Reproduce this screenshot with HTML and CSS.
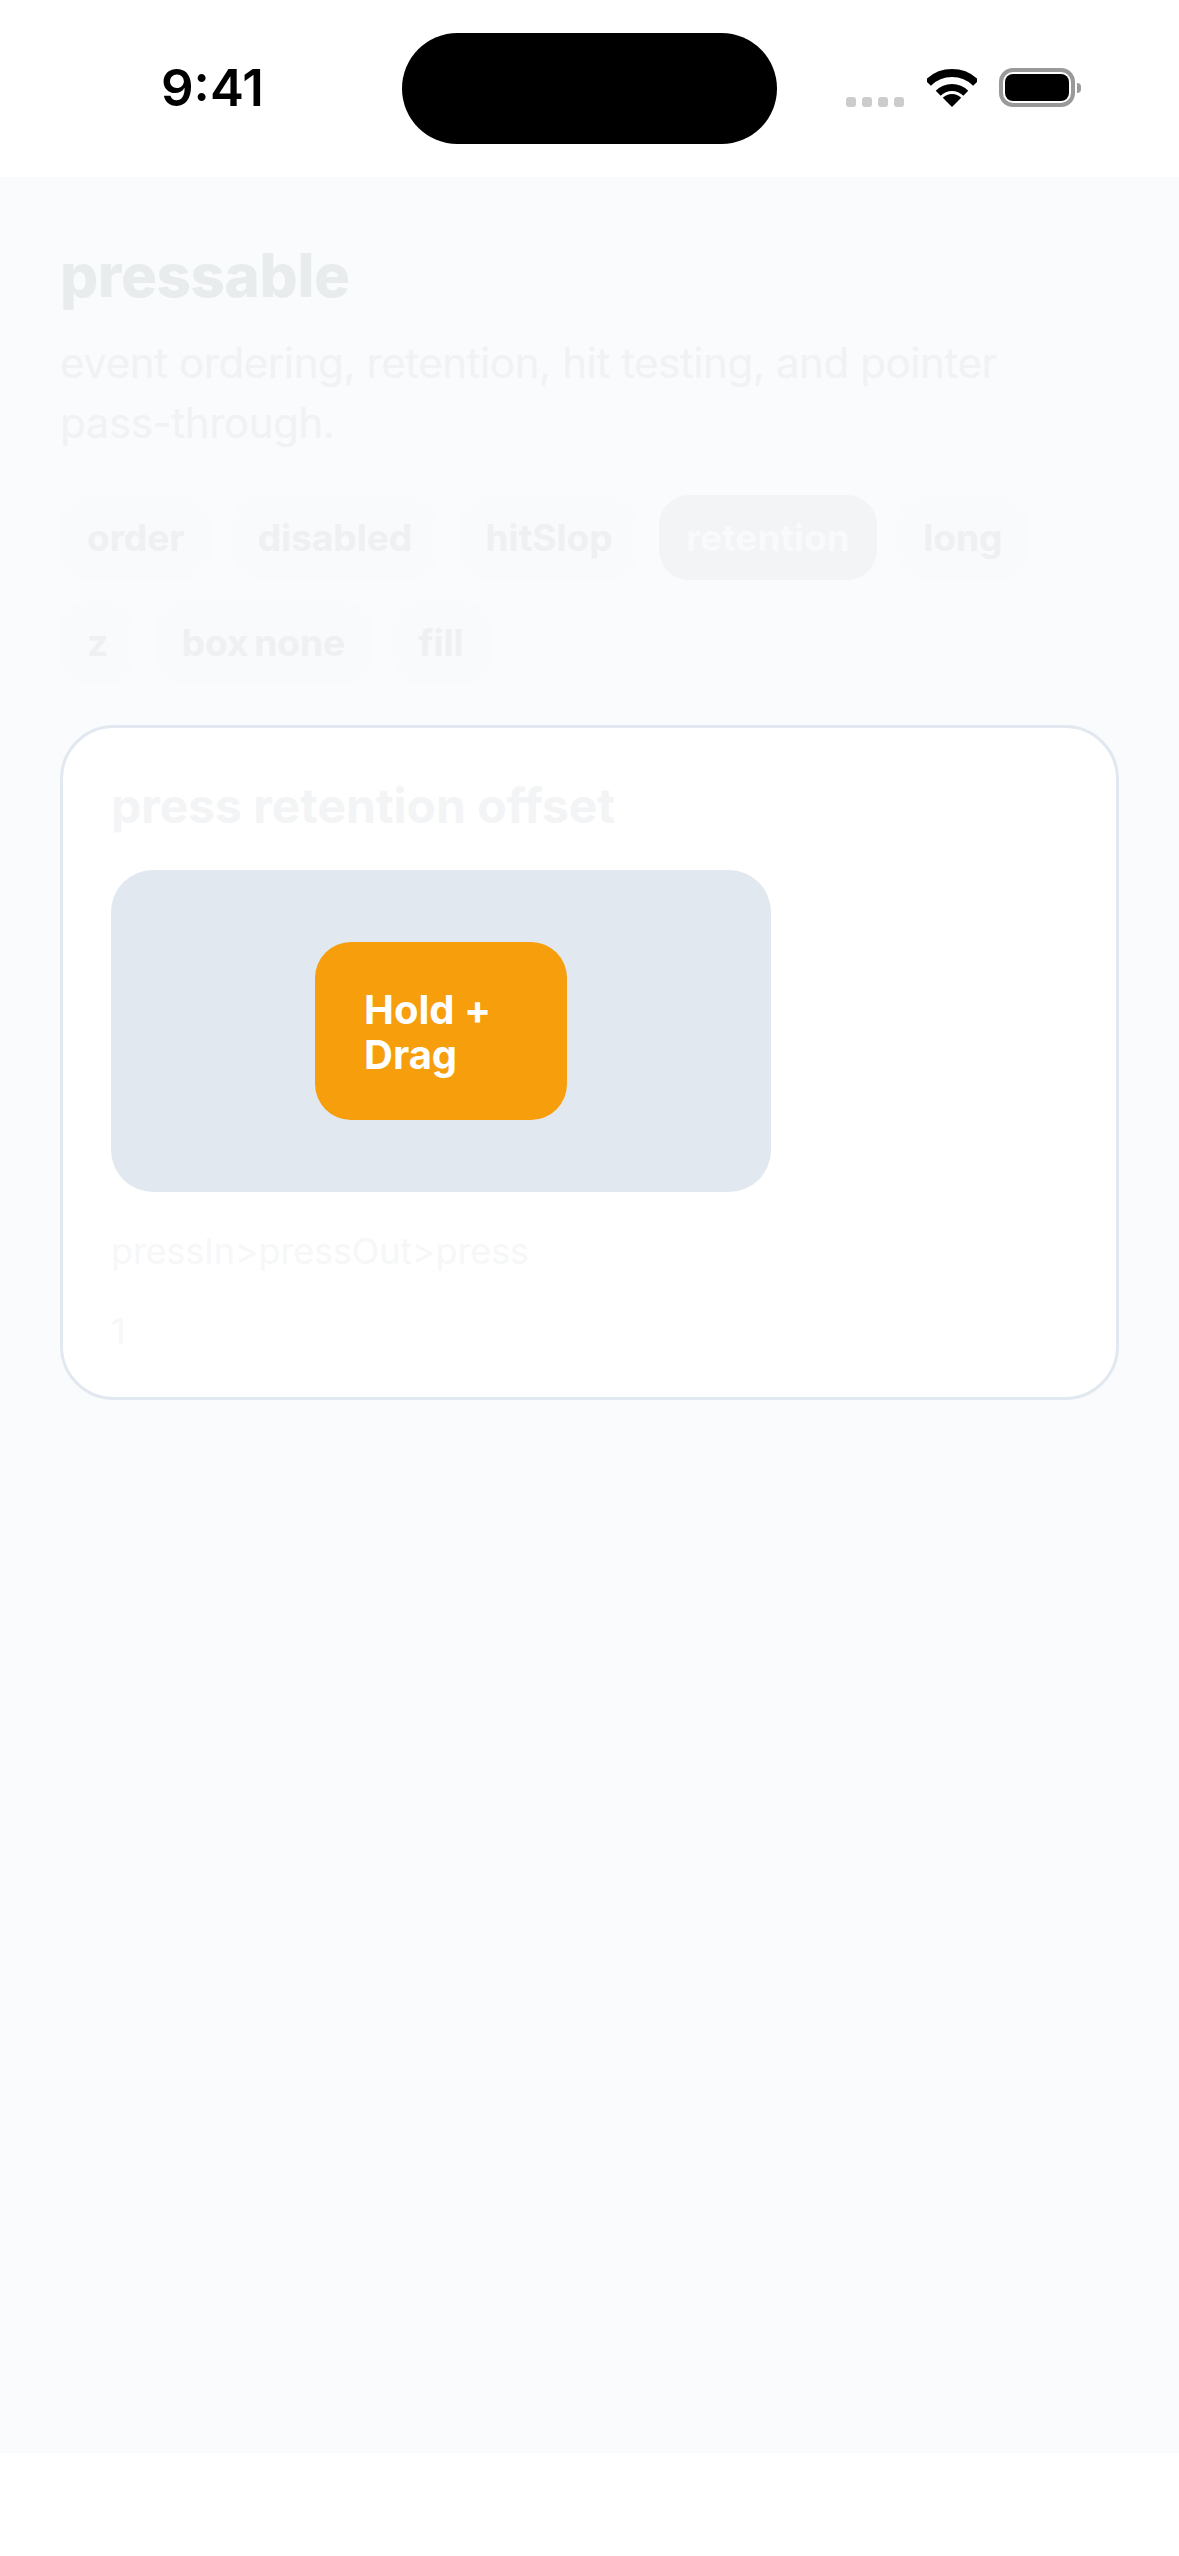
FILE: index.html
```html
<!DOCTYPE html>
<html lang="en">
<head>
    <meta charset="UTF-8">
    <meta name="viewport" content="width=device-width, initial-scale=1.0">
    <title>pressable</title>
    <link rel="stylesheet" href="styles.css">
</head>
<body>
    <div class="status-bar">
        <div class="time">9:41</div>
        <div class="island"></div>
        <div class="status-icons">
            <div class="signal">
                <span class="signal-dot"></span>
                <span class="signal-dot"></span>
                <span class="signal-dot"></span>
                <span class="signal-dot"></span>
            </div>
            <svg class="wifi" width="50" height="38" viewBox="0 0 50 38">
                <path d="M25 38L15.8 28.8A13 13 0 0 1 34.2 28.8Z" fill="#000"/>
                <path d="M11.2 24.2A19.5 19.5 0 0 1 38.8 24.2" fill="none" stroke="#000" stroke-width="7"/>
                <path d="M1 14A34 34 0 0 1 49 14" fill="none" stroke="#000" stroke-width="8"/>
            </svg>
            <div class="battery">
                <div class="battery-body"><div class="battery-fill"></div></div>
                <div class="battery-nub"></div>
            </div>
        </div>
    </div>

    <div class="screen">
        <h1 class="title">pressable</h1>
        <p class="subtitle">event ordering, retention, hit testing, and pointer pass-through.</p>

        <div class="chips">
            <div class="chip">order</div>
            <div class="chip">disabled</div>
            <div class="chip">hitSlop</div>
            <div class="chip active">retention</div>
            <div class="chip">long</div>
            <div class="chip">z</div>
            <div class="chip">box none</div>
            <div class="chip">fill</div>
        </div>

        <div class="card">
            <h2 class="card-title">press retention offset</h2>
            <div class="track">
                <div class="hold-btn">Hold + Drag</div>
            </div>
            <div class="log">pressIn&gt;pressOut&gt;press</div>
            <div class="count">1</div>
        </div>
    </div>

    <div class="home-area"></div>
</body>
</html>
```

FILE: styles.css
```css
* {
    margin: 0;
    padding: 0;
    box-sizing: border-box;
}

body {
    width: 1179px;
    height: 2556px;
    display: flex;
    flex-direction: column;
    font-family: Inter, "Liberation Sans", sans-serif;
    background: #ffffff;
}

.status-bar {
    height: 177px;
    display: flex;
    align-items: flex-start;
    background: #ffffff;
}

.time {
    width: 241px;
    margin: 58px 0 0 161px;
    font-size: 51px;
    line-height: 60px;
    font-weight: 600;
    color: #000000;
}

.island {
    width: 375px;
    height: 111px;
    margin-top: 33px;
    border-radius: 56px;
    background: #000000;
}

.status-icons {
    display: flex;
    align-items: flex-end;
    margin: 68px 0 0 69px;
}

.signal {
    display: flex;
    gap: 6px;
    margin-right: 23px;
}

.signal-dot {
    width: 10px;
    height: 10px;
    border-radius: 3px;
    background: #cccccc;
}

.wifi {
    display: block;
    margin-right: 22px;
}

.battery {
    display: flex;
    align-items: center;
}

.battery-body {
    width: 76px;
    height: 39px;
    padding: 2px;
    border: 4px solid #999999;
    border-radius: 14px;
}

.battery-fill {
    width: 100%;
    height: 100%;
    border-radius: 8px;
    background: #000000;
}

.battery-nub {
    width: 4px;
    height: 10px;
    margin-left: 2px;
    border-radius: 0 5px 5px 0;
    background: #999999;
}

.screen {
    flex: 1;
    padding: 62px 60px 0;
    background: #f9fbfd;
}

.title {
    font-size: 60px;
    line-height: 72px;
    font-weight: 800;
    letter-spacing: -0.4px;
    color: #e9eced;
}

.subtitle {
    margin-top: 22px;
    font-size: 42px;
    line-height: 60px;
    letter-spacing: -0.4px;
    color: #f0f2f4;
}

.chips {
    display: flex;
    flex-wrap: wrap;
    gap: 20px 19.5px;
    margin-top: 42px;
}

.chip {
    height: 85px;
    padding: 0 27px;
    border-radius: 30px;
    font-size: 37px;
    line-height: 85px;
    font-weight: 700;
    word-spacing: -3px;
    color: #eef0f2;
    background: #f9fafc;
}

.chip.active {
    color: #f9fafb;
    background: #f3f4f6;
}

.card {
    margin-top: 40px;
    height: 675px;
    padding: 48px;
    border: 3px solid #e2e8f0;
    border-radius: 54px;
    background: #ffffff;
}

.card-title {
    font-size: 48px;
    line-height: 60px;
    font-weight: 700;
    color: #f3f4f5;
}

.track {
    width: 660px;
    height: 322px;
    margin-top: 34px;
    display: flex;
    align-items: center;
    justify-content: center;
    border-radius: 42px;
    background: #e2e8f0;
}

.hold-btn {
    width: 252px;
    height: 178px;
    padding: 45px 48px 45px 49px;
    border-radius: 36px;
    font-size: 40px;
    line-height: 45px;
    font-weight: 700;
    color: #ffffff;
    background: #f69e0b;
}

.log {
    margin-top: 35px;
    font-size: 36px;
    line-height: 48px;
    letter-spacing: -0.15px;
    color: #f6f7f8;
}

.count {
    margin-top: 32px;
    font-size: 36px;
    line-height: 48px;
    color: #f6f7f8;
}

.home-area {
    height: 103px;
    background: #ffffff;
}
```
